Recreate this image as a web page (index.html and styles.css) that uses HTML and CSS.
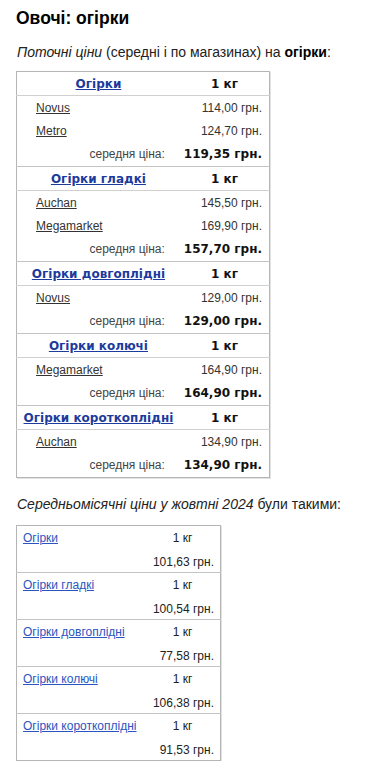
FILE: index.html
```html
<!DOCTYPE html>
<html lang="uk">
<head>
<meta charset="utf-8">
<link rel="stylesheet" href="styles.css">
</head>
<body>
<div class="page">
  <h1 class="title">Овочі: огірки</h1>
  <p class="intro"><i>Поточні ціни</i> (середні і по магазинах) на <b>огірки</b>:</p>

  <table class="cur">
    <colgroup><col class="c1"><col class="c2"></colgroup>
    <tbody class="grp">
      <tr class="hd"><td class="hname"><a href="#">Огірки</a></td><td class="unit">1 кг</td></tr>
      <tr class="first"><td class="store"><a href="#">Novus</a></td><td class="price">114,00 грн.</td></tr>
      <tr><td class="store"><a href="#">Metro</a></td><td class="price">124,70 грн.</td></tr>
      <tr class="av"><td class="avgl">середня ціна:</td><td class="avg">119,35 грн.</td></tr>
    </tbody>
    <tbody class="grp">
      <tr class="hd"><td class="hname"><a href="#">Огірки гладкі</a></td><td class="unit">1 кг</td></tr>
      <tr class="first"><td class="store"><a href="#">Auchan</a></td><td class="price">145,50 грн.</td></tr>
      <tr><td class="store"><a href="#">Megamarket</a></td><td class="price">169,90 грн.</td></tr>
      <tr class="av"><td class="avgl">середня ціна:</td><td class="avg">157,70 грн.</td></tr>
    </tbody>
    <tbody class="grp">
      <tr class="hd"><td class="hname"><a href="#">Огірки довгоплідні</a></td><td class="unit">1 кг</td></tr>
      <tr class="first"><td class="store"><a href="#">Novus</a></td><td class="price">129,00 грн.</td></tr>
      <tr class="av"><td class="avgl">середня ціна:</td><td class="avg">129,00 грн.</td></tr>
    </tbody>
    <tbody class="grp">
      <tr class="hd"><td class="hname"><a href="#">Огірки колючі</a></td><td class="unit">1 кг</td></tr>
      <tr class="first"><td class="store"><a href="#">Megamarket</a></td><td class="price">164,90 грн.</td></tr>
      <tr class="av"><td class="avgl">середня ціна:</td><td class="avg">164,90 грн.</td></tr>
    </tbody>
    <tbody class="grp">
      <tr class="hd"><td class="hname"><a href="#">Огірки короткоплідні</a></td><td class="unit">1 кг</td></tr>
      <tr class="first"><td class="store"><a href="#">Auchan</a></td><td class="price">134,90 грн.</td></tr>
      <tr class="av"><td class="avgl">середня ціна:</td><td class="avg">134,90 грн.</td></tr>
    </tbody>
  </table>

  <p class="intro intro2"><i>Середньомісячні ціни у жовтні 2024</i> були такими:</p>

  <table class="month">
    <colgroup><col class="m1"><col class="m2"></colgroup>
    <tbody class="mgrp">
      <tr><td class="mname"><a href="#">Огірки</a></td><td class="munit">1 кг</td></tr>
      <tr class="pr"><td></td><td class="mprice">101,63 грн.</td></tr>
    </tbody>
    <tbody class="mgrp">
      <tr><td class="mname"><a href="#">Огірки гладкі</a></td><td class="munit">1 кг</td></tr>
      <tr class="pr"><td></td><td class="mprice">100,54 грн.</td></tr>
    </tbody>
    <tbody class="mgrp">
      <tr><td class="mname"><a href="#">Огірки довгоплідні</a></td><td class="munit">1 кг</td></tr>
      <tr class="pr"><td></td><td class="mprice">77,58 грн.</td></tr>
    </tbody>
    <tbody class="mgrp">
      <tr><td class="mname"><a href="#">Огірки колючі</a></td><td class="munit">1 кг</td></tr>
      <tr class="pr"><td></td><td class="mprice">106,38 грн.</td></tr>
    </tbody>
    <tbody class="mgrp">
      <tr><td class="mname"><a href="#">Огірки короткоплідні</a></td><td class="munit">1 кг</td></tr>
      <tr class="pr"><td></td><td class="mprice">91,53 грн.</td></tr>
    </tbody>
  </table>
</div>
</body>
</html>
```

FILE: styles.css
```css
html, body {
  margin: 0;
  padding: 0;
  background: #fff;
}
body {
  font-family: "Liberation Sans", Arial, sans-serif;
  font-size: 12px;
  color: #222;
}
.page {
  padding: 8px 16px 0 16px;
}
.title {
  margin: 0;
  font-size: 17.5px;
  line-height: 20px;
  font-weight: bold;
  color: #000;
}
.intro {
  margin: 15px 0 0 1px;
  font-size: 14px;
  line-height: 18px;
  color: #222;
}
.intro b { color: #000; }
.intro2 { margin-top: 17px; }

table {
  border-collapse: collapse;
  border: 1px solid #b5b5b5;
  box-shadow: 1px 1px 0 #e2e2e2;
}
td { padding: 0; }

.cur {
  margin-top: 10px;
  width: 254px;
}
.c1 { width: 164px; }
.c2 { width: 90px; }
.grp { border-top: 1px solid #c4c4c4; }
.grp:first-of-type { border-top: none; }
.cur tr td { height: 23px; }
.cur tr.hd td { height: 23px; }
.cur tr.av td { height: 24px; }
.cur tr.first td { border-top: 1px solid #d0d0d0; }
.hname {
  text-align: center;
  font-family: "DejaVu Sans", sans-serif;
  font-weight: bold;
  font-size: 12px;
}
.hname a { color: #1c3b9c; }
.unit {
  text-align: center;
  font-family: "DejaVu Sans", sans-serif;
  font-weight: bold;
  font-size: 12px;
  color: #111;
}
.store { padding-left: 19px; }
.store a { color: #333; }
.price {
  text-align: right;
  padding-right: 7px;
  color: #333;
}
.avgl {
  text-align: right;
  padding-right: 15px;
  color: #444;
}
.avg {
  text-align: right;
  padding-right: 7px;
  font-family: "DejaVu Sans", sans-serif;
  font-weight: bold;
  font-size: 12px;
  color: #111;
}

.month {
  margin-top: 12px;
  width: 205px;
}
.m1 { width: 129px; }
.m2 { width: 76px; }
.mgrp { border-top: 1px solid #c4c4c4; }
.mgrp:first-of-type { border-top: none; }
.month td { height: 23px; }
.month tr.pr td {
  height: 21px;
  padding-top: 2px;
}
.mname {
  padding-left: 6px;
}
.mname a { color: #2a55c0; }
.munit {
  text-align: center;
  color: #222;
}
.mprice {
  text-align: right;
  padding-right: 6px;
  color: #222;
}
```
